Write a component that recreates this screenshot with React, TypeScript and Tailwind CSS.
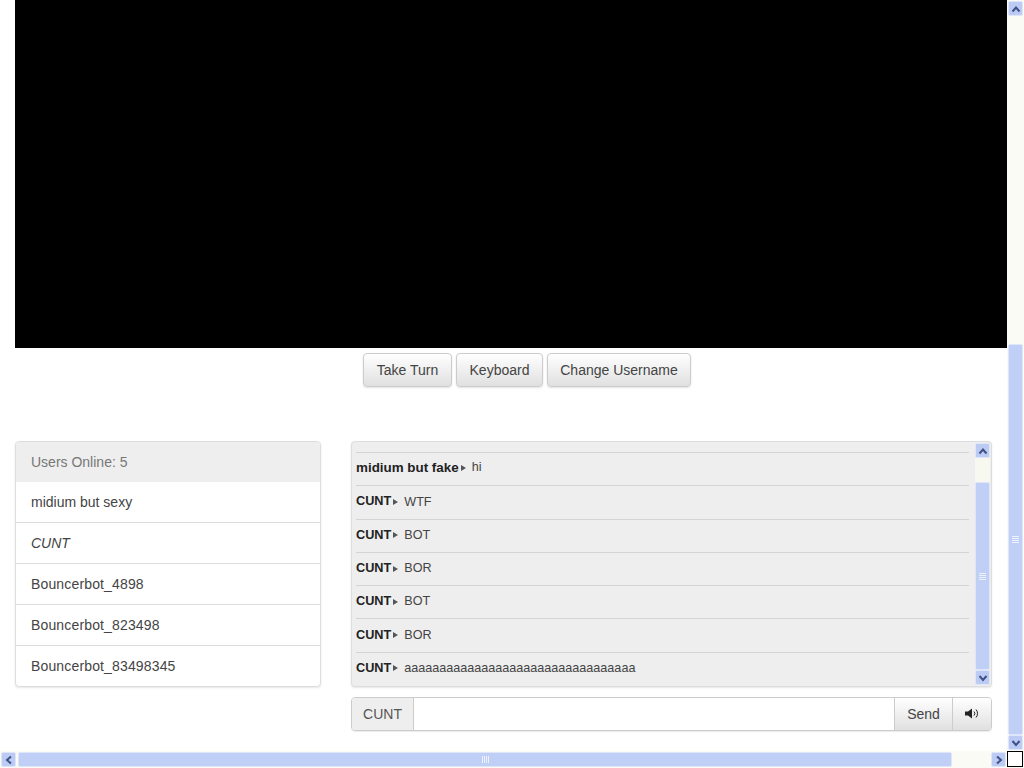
const USERS = [
  { name: 'midium but sexy' },
  { name: 'CUNT', italic: true },
  { name: 'Bouncerbot_4898', wide: true },
  { name: 'Bouncerbot_823498', wide: true },
  { name: 'Bouncerbot_83498345', wide: true },
]

const MESSAGES = [
  { from: 'midium but fake', text: 'hi' },
  { from: 'CUNT', text: 'WTF' },
  { from: 'CUNT', text: 'BOT' },
  { from: 'CUNT', text: 'BOR' },
  { from: 'CUNT', text: 'BOT' },
  { from: 'CUNT', text: 'BOR' },
  { from: 'CUNT', text: 'aaaaaaaaaaaaaaaaaaaaaaaaaaaaaaaaa' },
]

// XP style scrollbar arrow button
function ScrollButton({ dir, size = 'w-[15px] h-[15px]' }: { dir: 'up' | 'down' | 'left' | 'right'; size?: string }) {
  const points = {
    up: '1.5,7.5 5,3.5 8.5,7.5',
    down: '1.5,3 5,7 8.5,3',
    left: '7,1.5 3,5 7,8.5',
    right: '3,1.5 7,5 3,8.5',
  }[dir]
  return (
    <div className={`${size} shrink-0 flex items-center justify-center rounded-[2px] border border-[#dfe6fa] bg-[#bccbf3]`}>
      <svg width="10" height="10" viewBox="0 0 10 10" fill="none" stroke="#3f5287" strokeWidth="2">
        <polyline points={points} />
      </svg>
    </div>
  )
}

function Grip({ vertical }: { vertical?: boolean }) {
  return (
    <div className={`flex ${vertical ? 'flex-col gap-px' : 'flex-row gap-px'}`}>
      {[0, 1, 2, 3].map((i) => (
        <div key={i} className={vertical ? 'w-[7px] h-px bg-[#eef2fd]' : 'w-px h-[7px] bg-[#eef2fd]'} />
      ))}
    </div>
  )
}

function Button({ children, className = '' }: { children: React.ReactNode; className?: string }) {
  return (
    <button
      type="button"
      className={`h-[34px] rounded border border-[#ccc] bg-gradient-to-b from-white to-[#e0e0e0] text-[14px] text-[#444] shadow-[0_1px_2px_rgba(0,0,0,0.12)] ${className}`}
    >
      {children}
    </button>
  )
}

function IconVolume() {
  return (
    <svg width="14" height="11" viewBox="0 0 14 11" fill="none" stroke="#222" strokeWidth="1">
      <polygon points="0,3.5 3,3.5 7,0.5 7,10.5 3,7.5 0,7.5" fill="#222" stroke="none" />
      <path d="M9 3.5a3 3 0 0 1 0 4" />
      <path d="M11 1.5a6 6 0 0 1 0 8" />
    </svg>
  )
}

export default function App() {
  return (
    <div className="w-[1024px] h-[768px] overflow-hidden flex flex-col bg-white font-['Liberation_Sans',Arial,sans-serif] text-[14px] text-[#444]">
      <div className="flex flex-1 min-h-0">
        <main className="w-[1007px] pl-[15px]">
          <div className="h-[348px] bg-black" />

          <div className="flex gap-1 pt-[5px] pl-[348px]">
            <Button className="w-[89px]">Take Turn</Button>
            <Button className="w-[87px]">Keyboard</Button>
            <Button className="w-[144px]">Change Username</Button>
          </div>

          <div className="flex gap-[30px] pt-[54px]">
            <section className="w-[306px] h-[246px] rounded border border-[#ddd] bg-white shadow-[0_1px_2px_rgba(0,0,0,0.1)] overflow-hidden">
              <div className="h-[40px] flex items-center px-[15px] bg-[#eee] text-[#777]">Users Online: 5</div>
              {USERS.map((u, i) => (
                <div
                  key={u.name}
                  className={`flex items-center px-[15px] ${i > 0 ? 'h-[41px] border-t border-[#ddd]' : 'h-[40px]'} ${u.italic ? 'italic' : ''} ${u.wide ? 'tracking-[0.15px]' : ''}`}
                >
                  {u.name}
                </div>
              ))}
            </section>

            <div className="w-[641px]">
              <section className="h-[246px] flex rounded border border-[#ddd] bg-[#eee] shadow-[0_1px_2px_rgba(0,0,0,0.1)] overflow-hidden">
                <div className="flex-1 pt-[10px] pl-[4px] pr-[6px] overflow-hidden">
                  {MESSAGES.map((m, i) => (
                    <div key={i} className={`h-[33.3px] flex items-center border-t border-[#d4d4d4] ${i === 0 ? 'pb-[3px]' : 'pb-px'}`}>
                      <b className={m.from === 'CUNT' ? 'font-bold text-[#222] text-[12.7px]' : 'font-bold text-[13.4px] text-[#222]'}>{m.from}</b>
                      <svg width="5" height="6" viewBox="0 0 5 6" className="ml-[2px] mr-[6px]">
                        <polygon points="0,0 5,3 0,6" fill="#555" />
                      </svg>
                      <span className="text-[12.6px] text-[#444]">{m.text}</span>
                    </div>
                  ))}
                </div>
                <div className="w-[15px] mr-px my-px flex flex-col">
                  <ScrollButton dir="up" />
                  <div className="h-[24px] bg-[#f7f8f0]" />
                  <div className="flex-1 flex items-center justify-center rounded-[2px] border border-[#dfe6fa] bg-[#c0cff5]">
                    <Grip vertical />
                  </div>
                  <ScrollButton dir="down" />
                </div>
              </section>

              <div className="mt-[10px] h-[34px] flex rounded border border-[#ccc] shadow-[0_1px_1px_rgba(0,0,0,0.08)] overflow-hidden">
                <div className="w-[62px] flex items-center justify-center bg-[#eee] border-r border-[#ccc] text-[#555]">CUNT</div>
                <input className="flex-1 min-w-0 bg-white outline-none" aria-label="Message" />
                <div className="w-[58px] flex items-center justify-center border-l border-[#ccc] bg-gradient-to-b from-white to-[#e0e0e0]">Send</div>
                <div className="w-[39px] pb-[2px] flex items-center justify-center border-l border-[#ccc] bg-gradient-to-b from-white to-[#e0e0e0]">
                  <IconVolume />
                </div>
              </div>
            </div>
          </div>
        </main>

        <aside className="w-[17px] flex flex-col items-center pt-px pb-px bg-[#fbfbf6]">
          <ScrollButton dir="up" />
          <div className="h-[328px] w-full" />
          <div className="flex-1 w-[15px] flex items-center justify-center rounded-[2px] border border-[#dfe6fa] bg-[#c0cff5]">
            <Grip vertical />
          </div>
          <ScrollButton dir="down" />
        </aside>
      </div>

      <footer className="h-[17px] flex items-center bg-[#fbfbf6]">
        <ScrollButton dir="left" size="ml-px w-[15px] h-[15px]" />
        <div className="ml-[2px] w-[934px] h-[15px] flex items-center justify-center rounded-[2px] border border-[#dfe6fa] bg-[#c0cff5]">
          <Grip />
        </div>
        <div className="flex-1" />
        <ScrollButton dir="right" />
        <div className="ml-px mr-px mb-px w-[16px] h-[16px] border border-black bg-white" />
      </footer>
    </div>
  )
}
